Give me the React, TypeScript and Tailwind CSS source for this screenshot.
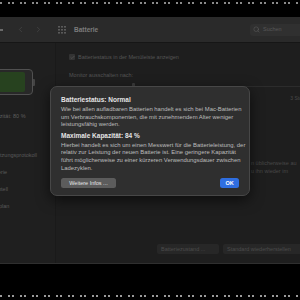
import React from "react";
import { ChevronLeft, ChevronRight, Search, Check } from "lucide-react";

const font = { fontFamily: '"Liberation Sans", Arial, sans-serif' };

// cropped screen edges: a row of small light dots
const dots = Array.from({ length: 75 }, (_, i) => i);

function DotRow({ tone }: { tone: string }) {
  return (
    <div className="flex gap-[2px] overflow-hidden">
      {dots.map((i) => (
        <span key={i} className={`block w-[2px] h-[2px] shrink-0 ${i % 3 === 1 ? "bg-transparent" : tone}`} />
      ))}
    </div>
  );
}

function GridDots() {
  return (
    <svg width="9" height="8" viewBox="0 0 9 8" className="text-[#5a5a5a]">
      {[0, 3, 6].map((y) =>
        [0, 3, 6].map((x) => <rect key={`${x}-${y}`} x={x} y={y} width="2" height="1.6" fill="currentColor" />)
      )}
    </svg>
  );
}

export default function App() {
  return (
    <div className="w-[300px] h-[300px] bg-black overflow-hidden" style={font}>
      <div className="h-[17px] pt-[2px]">
        <DotRow tone="bg-[#8a8a8a]" />
      </div>

      {/* window */}
      <div className="relative h-[247px] flex flex-col bg-[#1e1e1e] border-b border-[#2f2f2f]">
        {/* title bar */}
        <div className="h-[26px] shrink-0 flex items-center bg-[#2a2a2a] border-b border-[#161616]">
          <div className="w-[3px] h-[2px] bg-[#6a6a6a]" />
          <ChevronLeft size={9} strokeWidth={1.5} className="ml-[13px] text-[#4e4e4e]" />
          <ChevronRight size={9} strokeWidth={1.5} className="ml-[9px] text-[#4e4e4e]" />
          <div className="ml-[15px]">
            <GridDots />
          </div>
          <span className="ml-[7px] text-[6.5px] font-bold text-[#7c7c7c]">Batterie</span>
          <div className="ml-auto mr-[-4px] w-[54px] h-[12px] rounded-[3px] bg-[#303030] flex items-center gap-[3px] pl-[3px]">
            <Search size={7} strokeWidth={1.8} className="text-[#5e5e5e]" />
            <span className="text-[5.5px] text-[#585858]">Suchen</span>
          </div>
        </div>

        {/* body */}
        <div className="flex-1 flex min-h-0">
          <aside className="w-[56px] shrink-0 bg-[#1f1f1f] border-r border-[#1a1a1a] overflow-hidden">
            <div className="mt-[26px] -ml-[4px] flex items-center">
              <div className="w-[37px] h-[26px] rounded-[4px] border border-[#505050] bg-[#282828] p-[2px]">
                <div className="w-[26px] h-full rounded-[2px] bg-[#27421f]" />
              </div>
              <div className="w-[2px] h-[7px] bg-[#444] rounded-r-[1px]" />
            </div>
            <div className="mt-[17px] -ml-[13px] text-[5.5px] text-[#5e5e5e] whitespace-nowrap">Kapazität: 80 %</div>
            <div className="mt-[31px] flex flex-col gap-[8.5px] text-[5.5px] text-[#5a5a5a] whitespace-nowrap">
              <span className="-ml-[3px]">utzungsprotokoll</span>
              <span className="-ml-[2px]">erie</span>
              <span className="-ml-[2px]">ntell</span>
              <span className="-ml-[1px]">plan</span>
            </div>
          </aside>

          <main className="flex-1 flex flex-col pl-[13px] pt-[10px] text-[5.5px] text-[#555] overflow-hidden">
            <div className="flex items-center gap-[3px]">
              <div className="w-[6px] h-[6px] rounded-[1px] bg-[#333] flex items-center justify-center">
                <Check size={5} strokeWidth={3} className="text-[#5a5a5a]" />
              </div>
              <span>Batteriestatus in der Menüleiste anzeigen</span>
            </div>
            <div className="mt-[10px]">Monitor ausschalten nach:</div>
            <div className="mt-[3px] relative h-[6px]">
              <div className="absolute left-0 right-0 top-[3px] h-[1px] bg-[#2c2c2c]" />
              <div className="absolute left-[63px] top-0 w-[3px] h-[6px] rounded-[1px] bg-[#3c3c3c]" />
            </div>
            <div className="self-end mt-[6px] -mr-[2px] text-[5px] text-[#4a4a4a]">3 Std</div>
            <div className="mt-[58px] pl-[182px] text-[5.5px] leading-[7.5px] text-[#484848] whitespace-nowrap">
              <div>n üblicherweise au</div>
              <div>u ihn wieder im</div>
            </div>
            <div className="mt-auto mb-[9px] flex gap-[4px] pl-[88px] whitespace-nowrap">
              <div className="h-[10px] w-[62px] shrink-0 px-[4px] rounded-[2px] bg-[#272727] text-[5.5px] text-[#4c4c4c] flex items-center">Batteriezustand ...</div>
              <div className="h-[10px] w-[80px] shrink-0 px-[4px] rounded-[2px] bg-[#272727] text-[5.5px] text-[#4c4c4c] flex items-center">Standard wiederherstellen</div>
            </div>
          </main>
        </div>

        {/* sheet */}
        <div className="absolute left-[50px] top-[69px] w-[200px] h-[110px] rounded-[7px] bg-[#2f2f2f] border border-[#474747] shadow-[0_4px_14px_rgba(0,0,0,0.6)] px-[10px] pt-[9px]">
          <div className="text-[6.5px] font-bold text-[#e4e4e4] leading-[8px]">Batteriestatus: Normal</div>
          <p className="mt-[2px] text-[5.9px] leading-[7.6px] text-[#bdbdbd] whitespace-nowrap">
            Wie bei allen aufladbaren Batterien handelt es sich bei Mac-Batterien
            <br />
            um Verbrauchskomponenten, die mit zunehmendem Alter weniger
            <br />
            leistungsfähig werden.
          </p>
          <div className="mt-[3px] text-[6.5px] font-bold text-[#e4e4e4] leading-[8px]">Maximale Kapazität: 84 %</div>
          <p className="mt-[2px] text-[5.9px] leading-[7.6px] text-[#bdbdbd] whitespace-nowrap">
            Hierbei handelt es sich um einen Messwert für die Batterieleistung, der
            <br />
            relativ zur Leistung der neuen Batterie ist. Eine geringere Kapazität
            <br />
            führt möglicherweise zu einer kürzeren Verwendungsdauer zwischen
            <br />
            Ladezyklen.
          </p>
          <div className="mt-[6px] flex items-center justify-between">
            <div className="h-[10px] w-[55px] rounded-[2.5px] bg-[#5c5c5c] text-[5.5px] text-[#e6e6e6] flex items-center justify-center">
              Weitere Infos ...
            </div>
            <div className="h-[10px] w-[19px] rounded-[2.5px] bg-[#2f6ee0] text-[5.5px] font-bold text-white flex items-center justify-center">
              OK
            </div>
          </div>
        </div>
      </div>

      <div className="mt-[31px]">
        <DotRow tone="bg-[#9a9a9a]" />
      </div>
    </div>
  );
}
